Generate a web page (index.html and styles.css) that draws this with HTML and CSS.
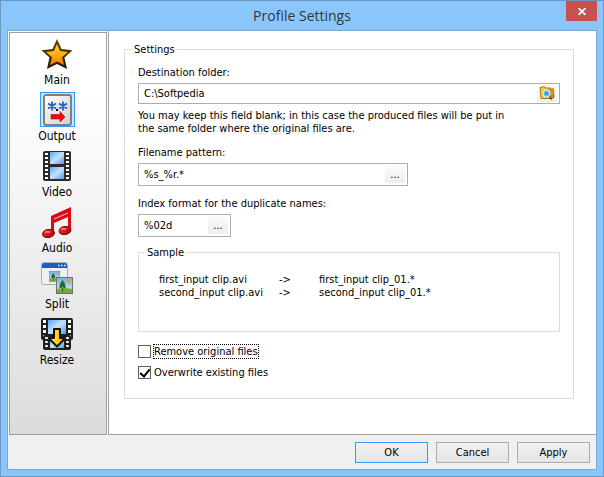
FILE: index.html
```html
<!DOCTYPE html>
<html lang="en">

<head>
    <meta charset="UTF-8">
    <meta name="viewport" content="width=device-width, initial-scale=1.0">
    <title>Profile Settings</title>
    <link rel="stylesheet" href="styles.css">
</head>

<body>
    <div class="window">
        <header class="titlebar">
            <h1 class="title">Profile Settings</h1>
            <button type="button" class="close" aria-label="Close">
                <svg width="8" height="7" viewBox="0 0 8 7"><path d="M.5 0L7.500 7M7.500 0L.5 7" stroke="#fff" stroke-width="1.700"/></svg>
            </button>
        </header>

        <form class="client">
            <div class="content">
                <nav class="sidebar">
                    <a class="item" href="#main">
                        <span class="icon">
                            <svg width="32" height="32" viewBox="0 0 32 32">
                                <defs><linearGradient id="star" x1="0" y1="0" x2="0" y2="1"><stop offset="0" stop-color="#ffd92a"/><stop offset=".5" stop-color="#ffb010"/><stop offset="1" stop-color="#f87800"/></linearGradient>
                                <linearGradient id="edge" x1="0" y1="0" x2="0" y2="1"><stop offset="0" stop-color="#704000"/><stop offset="1" stop-color="#1c1814"/></linearGradient></defs>
                                <path d="M16 1L20.500 11L31.500 12.200L23.500 19.500L26 31L16 26L6 31L8.500 19.500L.5 12.200L11.500 11z" fill="url(#edge)"/>
                                <path d="M16 6L19 13L27 14L21 19.200L23 27L16 23.500L9 27L11 19.200L5 14L13 13z" fill="url(#star)"/>
                            </svg>
                        </span>
                        Main
                    </a>
                    <a class="item selected" href="#output">
                        <span class="icon">
                            <svg width="29" height="32" viewBox="0 0 29 32">
                                <defs><linearGradient id="card" x1="0" y1="0" x2="1" y2="1"><stop offset="0" stop-color="#fff"/><stop offset="1" stop-color="#cfcfcf"/></linearGradient></defs>
                                <rect x="1" y="1" width="27" height="30" rx="2" fill="url(#card)" stroke="#808080" stroke-width="2"/>
                                <path d="M9 7.500v9M5 9.500l8 5M13 9.500l-8 5M20 7.500v9M16 9.500l8 5M24 9.500l-8 5" stroke="#2458d0" stroke-width="1.800"/>
                                <rect x="13" y="15" width="2" height="2" fill="#101010"/>
                                <path d="M8 20.500h9v-3l5 5.500l-5 5v-3H8z" fill="#e80c10" stroke="#b80000" stroke-width=".6"/>
                            </svg>
                        </span>
                        Output
                    </a>
                    <a class="item" href="#video">
                        <span class="icon">
                            <svg width="28" height="32" viewBox="0 0 28 32">
                                <defs><linearGradient id="frame" x1="0" y1="0" x2="1" y2="1"><stop offset="0" stop-color="#5aa8fa"/><stop offset=".5" stop-color="#c4e2ff"/><stop offset="1" stop-color="#4c9cf4"/></linearGradient></defs>
                                <rect x="0" y="1" width="28" height="30" rx="2" fill="#2b2b2b"/>
                                <path d="M3.500 3v27M24.500 3v27" stroke="#fff" stroke-width="3" stroke-dasharray="2 2"/>
                                <rect x="7" y="2" width="14" height="12" fill="url(#frame)"/>
                                <rect x="7" y="17" width="14" height="12" fill="url(#frame)"/>
                            </svg>
                        </span>
                        Video
                    </a>
                    <a class="item" href="#audio">
                        <span class="icon">
                            <svg width="32" height="32" viewBox="0 0 32 32">
                                <defs><linearGradient id="note" x1="0" y1="0" x2="1" y2="1"><stop offset="0" stop-color="#ff3434"/><stop offset="1" stop-color="#a00008"/></linearGradient></defs>
                                <path d="M10 10L30 1V25H27V11L13 17V28H10z" fill="#d80c12"/>
                                <path d="M13 13L27 7" stroke="#fff" stroke-opacity=".75"/>
                                <ellipse cx="7.500" cy="27.500" rx="6" ry="4" transform="rotate(-12 7.500 27.500)" fill="url(#note)" stroke="#800408"/>
                                <ellipse cx="24" cy="24.500" rx="6" ry="4" transform="rotate(-12 24 24.500)" fill="url(#note)" stroke="#800408"/>
                                <ellipse cx="6.500" cy="26" rx="3" ry="1.300" fill="#ff9a98" opacity=".6"/>
                                <ellipse cx="22.500" cy="23" rx="3" ry="1.300" fill="#ff9a98" opacity=".6"/>
                            </svg>
                        </span>
                        Audio
                    </a>
                    <a class="item" href="#split">
                        <span class="icon">
                            <svg width="32" height="32" viewBox="0 0 32 32">
                                <defs>
                                    <linearGradient id="sky" x1="0" y1="0" x2="0" y2="1"><stop offset="0" stop-color="#6ab4f4"/><stop offset="1" stop-color="#d8f0fa"/></linearGradient>
                                    <g id="photo">
                                        <rect x=".5" y=".5" width="16" height="16" fill="#a8c8b0" stroke="#707070"/>
                                        <rect x="1" y="1" width="15" height="15" fill="url(#sky)"/>
                                        <path d="M1 12q6-2 15 0v4H1z" fill="#74ae34"/>
                                        <circle cx="12.500" cy="4.500" r="2" fill="#ff9c20"/>
                                        <path d="M6.500 3q-3.500 4-3 8h6q.5-4-3-8zM6 10h1v5H6z" fill="#246c2c"/>
                                    </g>
                                </defs>
                                <rect x=".5" y=".5" width="26" height="22" rx="2" fill="#f0f0f4" stroke="#a8acb4"/>
                                <path d="M1 6V3q0-2 2-2H24q2 0 2 2v3z" fill="#1e5cc0"/>
                                <path d="M17 3.500h1.500M20 3.500h1.500M23 3.500h1.500" stroke="#fff" stroke-width="1.500"/>
                                <use href="#photo" transform="translate(8 9) scale(.65)"/>
                                <use href="#photo" x="15" y="15"/>
                            </svg>
                        </span>
                        Split
                    </a>
                    <a class="item" href="#resize">
                        <span class="icon">
                            <svg width="32" height="32" viewBox="0 0 32 32">
                                <defs><linearGradient id="arrow" x1="0" y1="0" x2="1" y2="0"><stop offset="0" stop-color="#fff040"/><stop offset="1" stop-color="#ffac00"/></linearGradient></defs>
                                <rect x="0" y="0" width="32" height="22" rx="2" fill="#202020"/>
                                <path d="M3.500 2v19M28.500 2v19" stroke="#fff" stroke-width="3" stroke-dasharray="3 2"/>
                                <rect x="7" y="2" width="18" height="14" fill="url(#frame)"/>
                                <rect x="2" y="17" width="28" height="15" rx="2" fill="#202020"/>
                                <path d="M5.500 19v11M26.500 19v11" stroke="#fff" stroke-width="2.500" stroke-dasharray="2 2"/>
                                <rect x="9" y="19" width="14" height="11" fill="url(#frame)"/>
                                <path d="M13 11h6v9h3.500v2L16 28.500L9.500 22v-2H13z" fill="url(#arrow)" stroke="#141000" stroke-width="2" stroke-linejoin="round"/>
                            </svg>
                        </span>
                        Resize
                    </a>
                </nav>

                <main class="page">
                    <fieldset class="group">
                        <legend>Settings</legend>

                        <span class="watermark" aria-hidden="true">SOFTPEDIA</span>

                        <label for="folder">Destination folder:</label>
                        <div class="field folder">
                            <input type="text" id="folder" value="C:\Softpedia">
                            <button type="button" class="browse" aria-label="Browse for folder">
                                <svg width="16" height="15" viewBox="0 0 16 15">
                                    <path d="M1 1.500L5.500.5L6.500 2H11.500V12.500H2z" fill="#f8c830" stroke="#a87808"/>
                                    <path d="M10 3.500l4.500-1l.5 9-3 1.500z" fill="#d8980c" stroke="#a87808" stroke-width=".7"/>
                                    <path d="M10 10l3 3.500" stroke="#8c5a18" stroke-width="2"/>
                                    <path d="M14.500 8v4" stroke="#e818b0"/>
                                    <circle cx="7.500" cy="7.500" r="3.700" fill="#6cc0f4" stroke="#e8f4ff"/>
                                    <circle cx="7.500" cy="7.500" r="1.500" fill="#2c88dc"/>
                                </svg>
                            </button>
                        </div>
                        <p class="hint">You may keep this field blank; in this case the produced files will be put in<br>
                            the same folder where the original files are.</p>

                        <label for="pattern">Filename pattern:</label>
                        <div class="field pattern">
                            <input type="text" id="pattern" value="%s_%r.*">
                            <button type="button" class="browse" aria-label="Choose pattern">...</button>
                        </div>

                        <label for="index">Index format for the duplicate names:</label>
                        <div class="field index">
                            <input type="text" id="index" value="%02d">
                            <button type="button" class="browse" aria-label="Choose index format">...</button>
                        </div>

                        <fieldset class="group sample">
                            <legend>Sample</legend>
                            <table class="names">
                                <tr>
                                    <td class="from">first_input clip.avi</td>
                                    <td class="to">-&gt;</td>
                                    <td>first_input clip_01.*</td>
                                </tr>
                                <tr>
                                    <td class="from">second_input clip.avi</td>
                                    <td class="to">-&gt;</td>
                                    <td>second_input clip_01.*</td>
                                </tr>
                            </table>
                        </fieldset>

                        <div class="check">
                            <input type="checkbox" id="remove">
                            <label for="remove" class="focused">Remove original files</label>
                        </div>
                        <div class="check">
                            <input type="checkbox" id="overwrite" checked>
                            <label for="overwrite">Overwrite existing files</label>
                        </div>
                    </fieldset>
                </main>
            </div>

            <footer class="buttons">
                <button type="button" class="button primary">OK</button>
                <button type="button" class="button">Cancel</button>
                <button type="button" class="button">Apply</button>
            </footer>
        </form>
    </div>
</body>

</html>
```
FILE: styles.css
```css
* {
    box-sizing: border-box;
}

body {
    margin: 0;
    font-family: "DejaVu Sans Condensed", Tahoma, sans-serif;
    font-size: 11px;
    line-height: 13px;
    color: #000;
}

button,
input {
    font: inherit;
    color: inherit;
    margin: 0;
    padding: 0;
}

/* Window frame */
.window {
    display: flex;
    flex-direction: column;
    min-height: 100vh;
    padding: 0 6px 6px;
    background-color: #8bc6fa;
    border: 1px solid #6c98c4;
}

.titlebar {
    position: relative;
    height: 29px;
}

.title {
    margin: 0;
    font-family: "Open Sans", sans-serif;
    font-size: 14px;
    font-weight: normal;
    line-height: 29px;
    text-align: center;
    color: #2c3640;
}

.close {
    position: absolute;
    top: 0;
    right: 0;
    display: flex;
    align-items: center;
    justify-content: center;
    width: 31px;
    height: 20px;
    border: 0;
    background-color: #c75050;
}

.client {
    display: flex;
    flex: 1;
    flex-direction: column;
    border: 1px solid #78a8d4;
    background-color: #f0f0f0;
}

.content {
    display: flex;
    flex: 1;
    background-color: #fff;
}

/* Sidebar */
.sidebar {
    width: 98px;
    margin: 1px 1px 0;
    padding-top: 3px;
    border: 1px solid #a0a0a0;
    background: linear-gradient(#fff, #fff 15%, #dcdcdc);
}

.item {
    display: flex;
    flex-direction: column;
    align-items: center;
    gap: 2px;
    margin-bottom: 4px;
    padding-right: 2px;
    font-size: 12px;
    line-height: 15px;
    color: #000;
    text-decoration: none;
}

.icon {
    display: flex;
    align-items: center;
    justify-content: center;
    width: 35px;
    height: 35px;
    border: 1px solid transparent;
}

.selected .icon {
    border-color: #3399ff;
    background-color: #cde6fc;
}

/* Settings page */
.page {
    flex: 1;
    padding: 12px 22px 35px 15px;
    border-left: 1px solid #a0a0a0;
    border-bottom: 1px solid #a0a0a0;
}

.group {
    position: relative;
    min-width: 0;
    margin: 0;
    padding: 10px 13px 18px;
    border: 1px solid #dcdcdc;
}

.group legend {
    margin-left: -6px;
    padding: 0 2px;
}

.group > label {
    display: block;
}

/* Faint logo behind the hint text */
.watermark {
    position: absolute;
    top: 51px;
    left: 32px;
    font-family: "Liberation Sans", Arial, sans-serif;
    font-size: 28px;
    line-height: 34px;
    color: #fff;
    text-shadow: 0 1px 1px #e0e0e0;
}

.field {
    position: relative;
    display: flex;
    align-items: center;
    height: 23px;
    margin: 4px 0 11px;
    padding: 0 2px 0 5px;
    border: 1px solid #abadb3;
    background-color: #fff;
}

.field input {
    flex: 1;
    min-width: 0;
    border: 0;
    outline: 0;
    background: none;
}

.folder {
    height: 21px;
    margin-bottom: 5px;
}

.pattern {
    width: 270px;
}

.index {
    width: 93px;
    margin-bottom: 9px;
}

.browse {
    display: flex;
    align-items: center;
    justify-content: center;
    width: 20px;
    height: 17px;
    border: 0;
    background: linear-gradient(#fafafa, #eee);
}

.hint {
    position: relative;
    margin: 0 0 11px;
}

.sample {
    height: 86px;
    margin-bottom: 12px;
    padding: 14px 20px;
}

.sample legend {
    margin-left: -14px;
}

.names {
    border-collapse: collapse;
}

.names td {
    padding: 0;
}

.names .from {
    width: 120px;
}

.names .to {
    width: 40px;
}

.check {
    display: flex;
    align-items: center;
    gap: 2px;
    height: 15px;
    margin-bottom: 6px;
}

.check:last-child {
    margin-bottom: 0;
}

.check input {
    display: grid;
    place-items: center;
    width: 13px;
    height: 13px;
    border: 1px solid #606060;
    background-color: #fff;
    appearance: none;
}

.check input:checked::before {
    content: "";
    width: 4px;
    height: 8px;
    margin-bottom: 2px;
    border: solid #000;
    border-width: 0 2px 2px 0;
    transform: rotate(40deg);
}

.check label {
    border: 1px solid transparent;
}

.check .focused {
    border: 1px dotted #000;
}

/* Bottom buttons */
.buttons {
    display: flex;
    justify-content: flex-end;
    gap: 8px;
    padding: 7px 6px 6px;
}

.button {
    width: 73px;
    height: 21px;
    border: 1px solid #acacac;
    background: linear-gradient(#f0f0f0, #e5e5e5);
}

.button.primary {
    border-color: #3399ff;
}
```
